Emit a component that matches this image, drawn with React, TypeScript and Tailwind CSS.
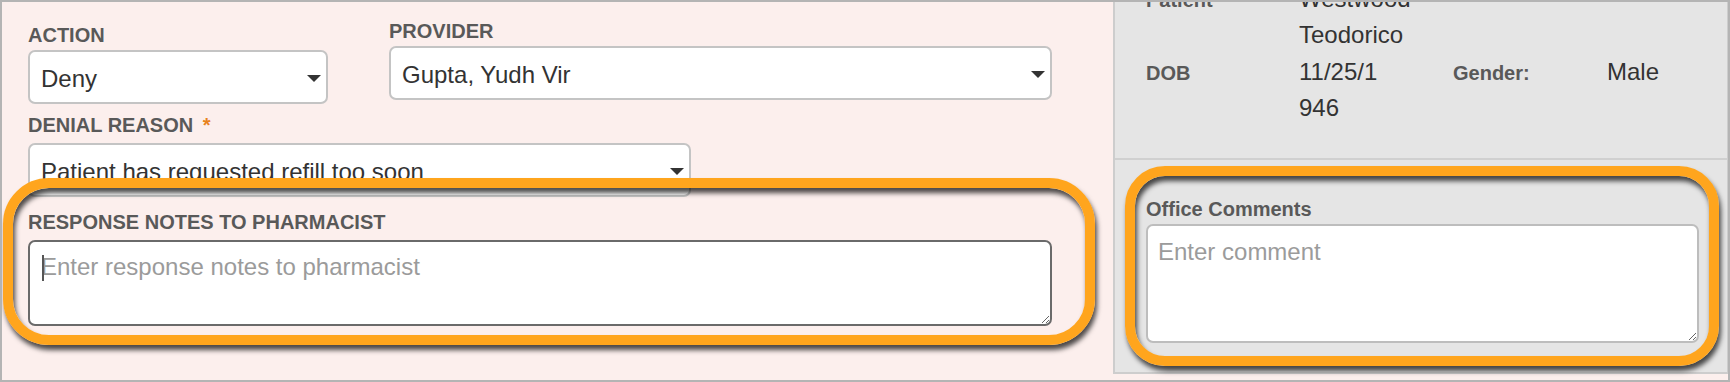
import React from 'react'

const FONT = "font-['Liberation_Sans',Arial,Helvetica,sans-serif]"

function Label({ children }: { children: React.ReactNode }) {
  return (
    <div className="text-[20px] leading-[23px] font-bold text-[#595959] whitespace-nowrap">
      {children}
    </div>
  )
}

function FakeSelect({ value, className = '' }: { value: string; className?: string }) {
  return (
    <div
      className={`h-[54px] flex items-center justify-between bg-white border-2 border-[#c4c4c4] rounded-[7px] pl-[11px] pr-[5px] pt-[3px] ${className}`}
    >
      <span className="text-[24px] leading-[28px] text-[#333] whitespace-nowrap">{value}</span>
      <span className="w-0 h-0 border-x-[7px] border-t-[7px] border-x-transparent border-t-[#333]" />
    </div>
  )
}

// orange annotation ring drawn over the form
function Ring({ className }: { className: string }) {
  return (
    <div
      className={`absolute pointer-events-none border-[10px] border-[#ffa51d] shadow-[2px_5px_5px_rgba(0,0,0,0.7),inset_2px_5px_5px_rgba(0,0,0,0.7)] ${className}`}
    />
  )
}

export default function App() {
  return (
    <div
      className={`w-[1730px] h-[382px] overflow-hidden flex border-2 border-[#b4b4b4] bg-[#fcefed] ${FONT}`}
    >
      {/* Left: response form */}
      <div className="w-[1111px] shrink-0 pl-[26px] pt-[22px]">
        <div className="flex gap-[61px]">
          <div className="w-[300px]">
            <Label>ACTION</Label>
            <FakeSelect value="Deny" className="mt-[3px]" />
          </div>
          <div className="w-[663px] -mt-1">
            <Label>PROVIDER</Label>
            <FakeSelect value="Gupta, Yudh Vir" className="mt-[3px]" />
          </div>
        </div>

        <div className="mt-[10px] w-[663px]">
          <Label>
            DENIAL REASON <span className="text-[#e8821e] ml-[4px]">*</span>
          </Label>
          <FakeSelect value="Patient has requested refill too soon" className="mt-[6px]" />
        </div>

        <div className="relative mt-[14px] w-[1024px]">
          <Label>RESPONSE NOTES TO PHARMACIST</Label>
          <textarea
            placeholder="Enter response notes to pharmacist"
            className="mt-[6px] block w-[1024px] h-[86px] bg-white border-2 border-[#6a6a6a] rounded-[7px] pl-[11px] pt-[11px] text-[24px] leading-[28px] text-[#333] placeholder:text-[#9b9b9b] outline-none"
          />
          <div className="absolute left-[14px] top-[44px] w-[2px] h-[26px] bg-[#555] pointer-events-none" />
          <Ring className="-left-[25px] -right-[43px] -top-[33px] -bottom-[19px] rounded-[46px]" />
        </div>
      </div>

      {/* Right: patient info + office comments */}
      <div className="w-[615px] h-[372px] shrink-0 self-start bg-[#e5e5e5] border-l-2 border-r border-b-2 border-[#cdcdcd] flex flex-col">
        <div className="pl-[31px] pb-[32px] border-b-2 border-[#d0d0d0]">
          <div className="-mt-[21px] grid grid-cols-[153px_154px_154px_1fr] items-baseline gap-y-[1px] text-[24px] leading-[36px] text-[#333]">
            <Label>Patient</Label>
            <div>Westwood Teodorico</div>
            <div />
            <div />
            <Label>DOB</Label>
            <div>
              11/25/1
              <br />
              946
            </div>
            <Label>Gender:</Label>
            <div>Male</div>
          </div>
        </div>

        <div className="relative flex-1 pl-[31px] pr-[28px] pt-[38px]">
          <Label>Office Comments</Label>
          <textarea
            placeholder="Enter comment"
            className="mt-[3px] block w-[553px] h-[119px] bg-white border-2 border-[#bdbdbd] rounded-[7px] pl-[10px] pt-[12px] text-[24px] leading-[28px] text-[#333] placeholder:text-[#9b9b9b] outline-none"
          />
          <Ring className="left-[10px] right-[8px] top-[6px] bottom-[6px] rounded-[40px]" />
        </div>
      </div>
    </div>
  )
}
